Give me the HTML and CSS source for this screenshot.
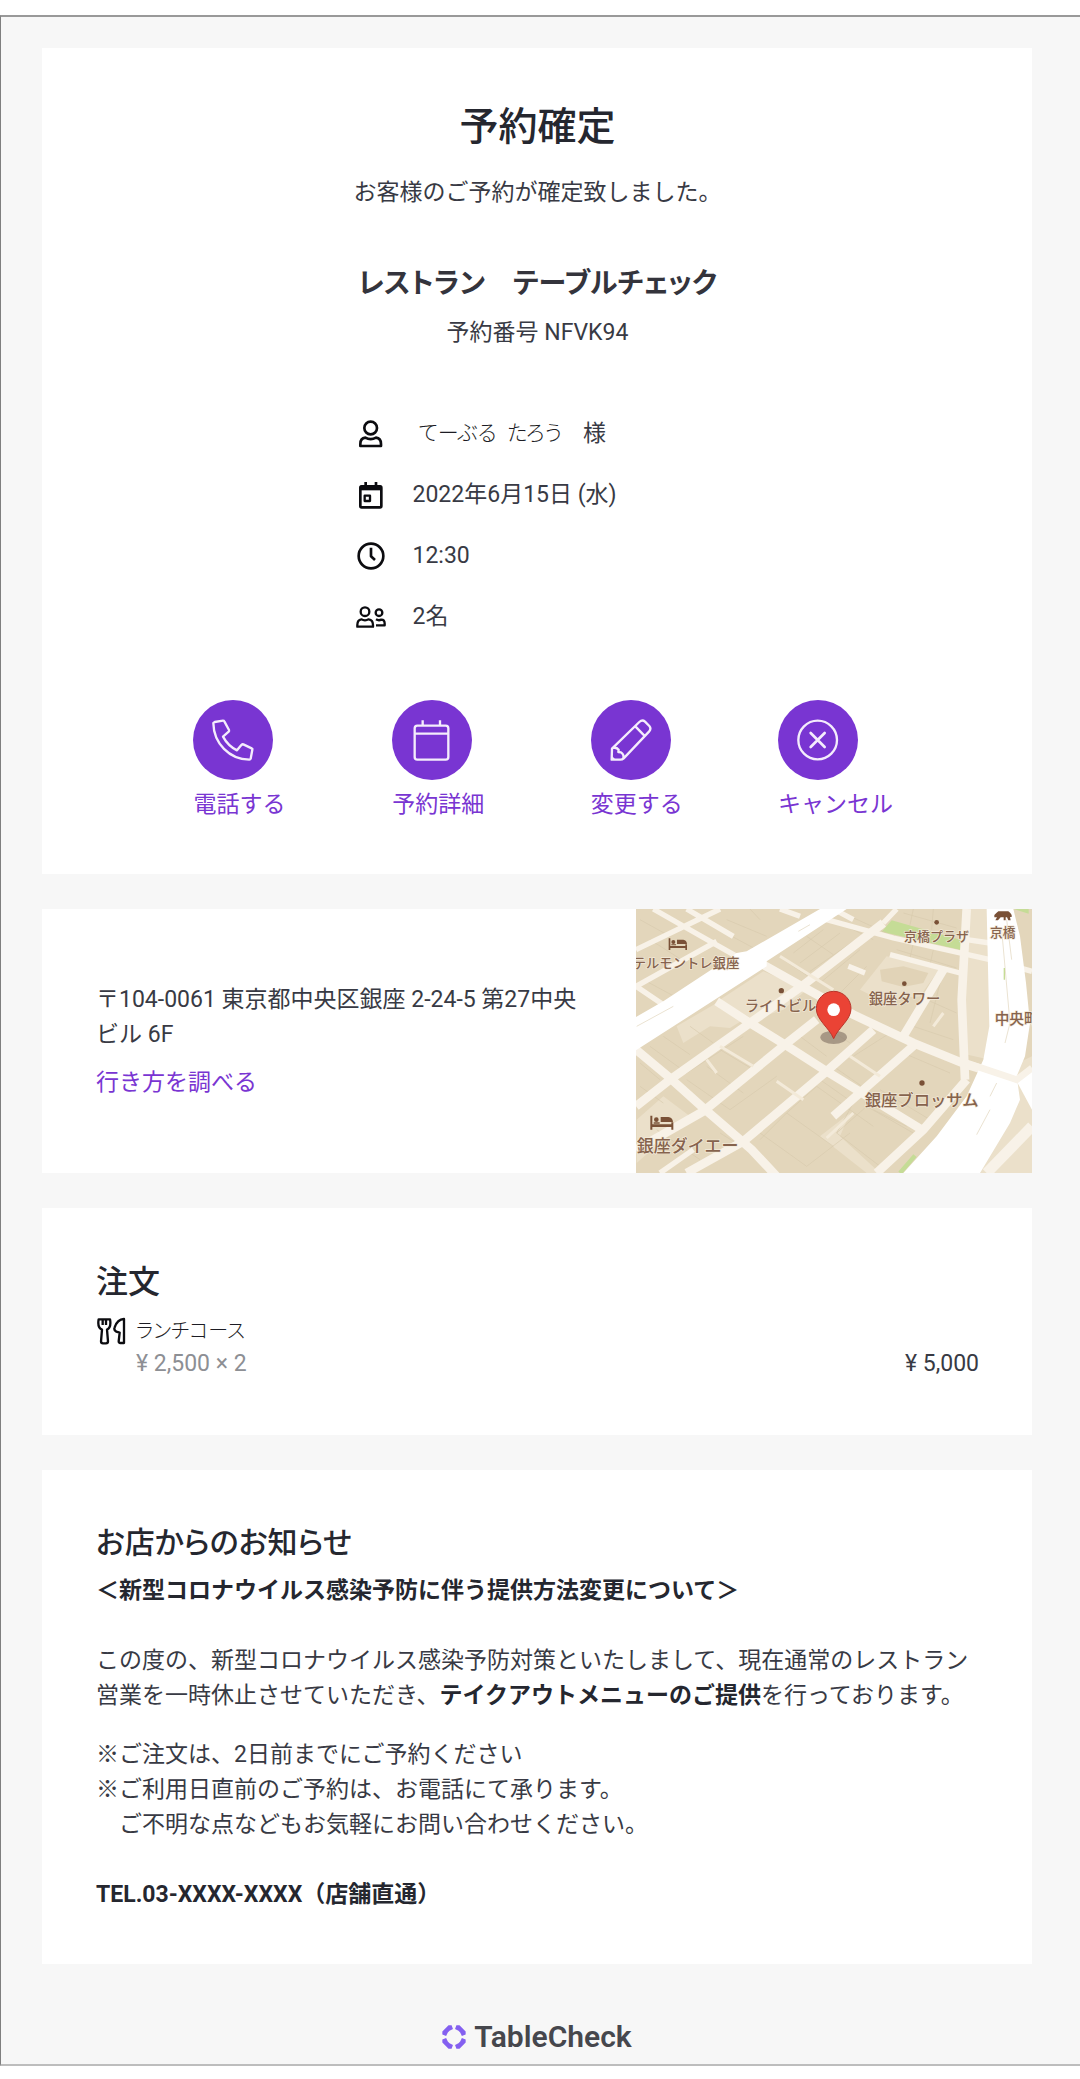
FILE: index.html
```html
<!DOCTYPE html>
<html lang="ja">
<head>
<meta charset="utf-8">
<meta name="viewport" content="width=device-width, initial-scale=1">
<title>予約確定 - TableCheck</title>
<link rel="stylesheet" href="styles.css">
</head>
<body>
<div class="frame">
  <main class="stack">
    <section class="card summary">
      <h1 class="title">予約確定</h1>
      <p class="lead">お客様のご予約が確定致しました。</p>
      <h2 class="heading shop">レストラン　テーブルチェック</h2>
      <p class="number">予約番号 NFVK94</p>

      <ul class="facts">
        <li class="fact">
          <svg class="icon" viewBox="0 0 90 90" aria-hidden="true"><circle cx="44" cy="27" r="19"/><path d="M13 81H75V75C75 65 70 57 60 56Q44 65 28 56C18 57 13 65 13 75Z"/></svg>
          <span class="guest"><span class="guest-name">てーぶる&ensp;たろう</span><span>様</span></span>
        </li>
        <li class="fact">
          <svg class="icon" viewBox="0 0 90 90" aria-hidden="true"><rect x="13" y="19" width="63" height="63" rx="4"/><path class="solid" d="M13 17H76V31H13Z"/><path d="M29 6V20M60 6V20"/><rect class="thin" x="26" y="47" width="16" height="16"/></svg>
          <span>2022年6月15日 (水)</span>
        </li>
        <li class="fact">
          <svg class="icon" viewBox="0 0 90 90" aria-hidden="true"><circle cx="45" cy="45" r="37"/><path d="M45 20V46L57 57"/></svg>
          <span>12:30</span>
        </li>
        <li class="fact">
          <svg class="icon" viewBox="0 0 90 90" aria-hidden="true"><circle class="thin" cx="27" cy="29" r="13"/><circle class="thin" cx="69" cy="32" r="10"/><path class="thin" d="M4 74H51V69C51 60 47 53 38 52Q27 58 16 52C7 53 4 60 4 69ZM60 70H86V65C86 58 82 53 76 53Q68 57 60 52"/></svg>
          <span>2名</span>
        </li>
      </ul>

      <nav class="actions" aria-label="予約の操作">
        <a class="action" href="#call">
          <svg class="disc" viewBox="0 0 240 240" aria-hidden="true"><circle class="disc-bg" cx="120" cy="120" r="120"/><path d="M61 69Q62 67 65 66L90 62Q93 62 94 64L108 90Q109 93 107 95L90 110Q105 138 132 151L145 135Q148 132 151 133L176 145Q179 146 178 149L173 176Q172 179 169 179C109 178 62 130 61 69Z"/></svg>
          <span>電話する</span>
        </a>
        <a class="action" href="#detail">
          <svg class="disc" viewBox="0 0 240 240" aria-hidden="true"><circle class="disc-bg" cx="120" cy="120" r="120"/><rect x="68" y="77" width="101" height="102" rx="8"/><path d="M68 101H169M92 61V77M144 61V77"/></svg>
          <span>予約詳細</span>
        </a>
        <a class="action" href="#change">
          <svg class="disc" viewBox="0 0 240 240" aria-hidden="true"><circle class="disc-bg" cx="120" cy="120" r="120"/><path d="M62 179L63 146L145 66Q154 58 162 65L175 78Q182 86 174 95L98 175Q94 179 88 179ZM133 79L160 107M66 144Q76 141 83 149L82 156L90 157Q100 164 97 175"/><path class="nib" d="M61 166L74 179H61Z"/></svg>
          <span>変更する</span>
        </a>
        <a class="action" href="#cancel">
          <svg class="disc" viewBox="0 0 240 240" aria-hidden="true"><circle class="disc-bg" cx="120" cy="120" r="120"/><circle cx="119" cy="120" r="58"/><path class="cross" d="M98 99L140 141M140 99L98 141"/></svg>
          <span>キャンセル</span>
        </a>
      </nav>
    </section>

    <section class="card place">
      <div class="address">
        <p>〒104-0061 東京都中央区銀座 2-24-5 第27中央ビル 6F</p>
        <a class="route" href="#route">行き方を調べる</a>
      </div>
      <svg class="map" viewBox="48 28 1188 792" preserveAspectRatio="xMidYMid slice" role="img" aria-label="地図">
        <rect x="48" y="28" width="1188" height="792" fill="#e3d6bb"/>
        <!-- open lots and parks -->
        <g fill="#ebe0ca">
          <path d="M300 300L430 215L560 270L490 330L400 360ZM170 380L290 310L370 360L330 385L270 380L190 430ZM600 710L690 640L660 710L780 820H740ZM720 270L800 170L960 205L900 290L780 300ZM1040 28H1110V480L1020 460Z"/>
          <path d="M130 590L210 650L50 790V660ZM1110 530L1236 470V820H1080Z"/>
        </g>
        <path d="M780 210L850 200L925 220L910 250L850 262L785 245Z" fill="#e1d3b7"/>
        <path d="M815 62L1026 122V152L785 96ZM1182 28H1226V42Z" fill="#c5dc96"/>
        <!-- plot outlines -->
        <g fill="none" stroke="#d8caae" stroke-width="2">
          <path d="M90 440L200 520L370 410M130 410L210 465M210 380L280 430M300 450L400 510M200 540L330 630L470 530M260 500L370 580M420 700L560 800M420 720L500 640L640 740M500 640L590 560L760 680M560 800L690 700M600 540L700 610L650 700L780 800M650 700L740 620L880 700"/>
          <path d="M490 180L580 240M520 160L610 90M540 190L660 100M570 215L700 125M560 110L640 165M640 60L760 120M690 50L800 100M600 250L720 150M650 290L740 200M850 40L1010 85M880 28L870 75M940 28L935 90M830 150L1010 205M880 130L870 175M940 150L930 195M700 470L810 400L870 430M640 500L740 570L850 480M850 460L990 520M760 630L860 680M780 570L930 660M880 380L1000 420M920 300L1010 340M960 250L930 370M540 410L620 470M600 370L690 430M60 560L130 610M60 490L120 540M300 700L380 750M110 690L240 780M320 60L440 110M280 80L410 150M90 120L200 190M60 60L150 110M70 240L200 310M390 28L420 60"/>
        </g>
        <!-- local streets -->
        <g fill="none" stroke="#f8f2e8" stroke-width="26">
          <path d="M48 450L150 535L250 625L395 750L470 830M290 305L390 370L495 435L620 515L905 690M430 195L545 260L700 345L880 430L1040 495L1190 540"/>
          <path d="M48 620L150 540L390 370L545 260L790 70M48 750L250 635L495 435L590 360M200 820L370 725L620 515L760 390M640 650L890 430M770 820L910 690L1040 540"/>
          <path d="M1040 28L1025 300L1035 540M850 410L970 210"/>
        </g>
        <g fill="none" stroke="#f8f2e8" stroke-width="16">
          <path d="M100 28L200 85L350 170M48 150L300 28M48 260L290 125M48 260L130 315M200 28L340 110M480 28L540 50M620 60L820 115L1110 180L1236 215M810 165L1020 220M790 70L830 28M685 200L735 220M120 820L220 750M1040 120L1110 130M640 28L700 60"/>
        </g>
        <g fill="none" stroke="#f3ead9" stroke-width="9">
          <path d="M260 480L290 520M470 545L550 600M300 440L400 500M690 470L780 530M620 715L700 640M940 380L970 340M480 170L640 270"/>
        </g>
        <!-- main avenues -->
        <g fill="#fff">
          <path d="M48 352L130 305L350 160L380 155L600 28H680L440 185V200L48 452Z"/>
          <path d="M1100 28H1180L1200 110L1218 250L1230 370L1215 470L1190 530L1200 600L1170 670L1080 820H850L950 710L1040 590L1090 480L1108 380Z"/>
          <path d="M1190 545L1236 510V630Z"/>
        </g>
        <path d="M1040 490L1190 540L1236 505" fill="none" stroke="#f8f2e8" stroke-width="20"/>
        <path d="M1236 680L1100 820" fill="none" stroke="#f8f2e8" stroke-width="32"/>
        <path d="M1145 90L1170 370L1155 430M1160 60L1175 180M1130 550L1110 590M1110 630L1070 705M50 380L160 320M535 95L570 75" fill="none" stroke="#ebe3d2" stroke-width="3"/>
        <path d="M1153 205V240" stroke="#c5dc96" stroke-width="4"/>
        <path d="M840 820L885 768" stroke="#c5dc96" stroke-width="13"/>
        <!-- place marks -->
        <g fill="#7a5137">
          <circle cx="950" cy="68" r="7"/><circle cx="484" cy="273" r="8"/><circle cx="853" cy="252" r="7"/><circle cx="906" cy="550" r="8"/>
          <path d="M146 116H151V139H196V134H201V151H196V145H151V151H146ZM171 120H190Q200 121 201 133H171ZM154 127a6 6 0 1 1 12 0a6 6 0 1 1 -12 0M154 134H168V137H154Z"/>
          <path d="M91 648H97V674H154V668H160V690H154V682H97V690H91ZM122 652H145Q158 654 159 667H122ZM102 660a7 7 0 1 1 14 0a7 7 0 1 1 -14 0M101 668H119V672H101Z"/>
          <path d="M1123 46L1129 40L1135 35H1165L1171 40L1175 46V52H1170L1172 62H1165L1161 53H1157V62H1151V53H1142L1134 62H1126L1131 53H1123Z"/>
        </g>
        <g class="map-text">
          <text x="852" y="123" font-size="39">京橋プラザ</text>
          <text x="1110" y="112" font-size="38">京橋</text>
          <text x="38" y="204" font-size="40">テルモントレ銀座</text>
          <text x="374" y="333" font-size="43">ライトビル</text>
          <text x="746" y="313" font-size="43">銀座タワー</text>
          <text x="1124" y="372" font-size="44">中央町</text>
          <text x="734" y="618" font-size="49">銀座ブロッサム</text>
          <text x="50" y="756" font-size="51">銀座ダイエー</text>
        </g>
        <ellipse cx="641" cy="413" rx="40" ry="20" fill="#6b5a50" opacity=".5"/>
        <path d="M641 417C627 383 589 361 589 327A52 52 0 0 1 693 327C693 361 655 383 641 417Z" fill="#ea4335" stroke="#b9362b" stroke-width="3"/>
        <circle cx="641" cy="330" r="19" fill="#fff"/>
      </svg>
    </section>

    <section class="card order">
      <h2 class="heading">注文</h2>
      <div class="item">
        <svg class="icon" viewBox="0 0 90 90" aria-hidden="true"><path class="thin" d="M8 10H42C45 26 43 36 33 41L36 76Q36 82 30 82H21Q15 82 15 76L18 41C7 36 5 26 8 10ZM20 12V27M30 12V27M84 9V81H73Q68 81 68 76L71 50L61 47C55 44 54 39 56 34C60 22 67 10 84 9Z"/></svg>
        <div class="item-text">
          <p class="item-name">ランチコース</p>
          <p class="item-line"><span class="unit">¥ 2,500 × 2</span><span>¥ 5,000</span></p>
        </div>
      </div>
    </section>

    <section class="card notice">
      <h2 class="heading">お店からのお知らせ</h2>
      <p class="strong">＜新型コロナウイルス感染予防に伴う提供方法変更について＞</p>
      <p class="spaced">この度の、新型コロナウイルス感染予防対策といたしまして、現在通常のレストラン営業を一時休止させていただき、<strong>テイクアウトメニューのご提供</strong>を行っております。</p>
      <p class="notes">※ご注文は、2日前までにご予約ください<br>※ご利用日直前のご予約は、お電話にて承ります。<br>　ご不明な点などもお気軽にお問い合わせください。</p>
      <p class="strong spaced">TEL.03-XXXX-XXXX（店舗直通）</p>
    </section>
  </main>

  <footer class="brand">
    <svg class="mark" viewBox="0 0 70 70" aria-hidden="true">
      <path d="M1 19L19 1H28L32 12L22 17L17 22L12 32L1 28Z"/>
      <path d="M1 19L19 1H28L32 12L22 17L17 22L12 32L1 28Z" transform="rotate(90 35 35)"/>
      <path d="M1 19L19 1H28L32 12L22 17L17 22L12 32L1 28Z" transform="rotate(180 35 35)"/>
      <path d="M1 19L19 1H28L32 12L22 17L17 22L12 32L1 28Z" transform="rotate(270 35 35)"/>
    </svg>
    <span>TableCheck</span>
  </footer>
</div>
</body>
</html>
```
FILE: styles.css
```css
* { box-sizing: border-box; }

body {
  margin: 0;
  padding: 15px 0 13px;
  background: #fff;
  color: #383a44;
  font: 23px/35px Roboto, "Noto Sans CJK JP", sans-serif;
}

h1, h2, p, ul { margin: 0; padding: 0; }

.frame {
  padding: 31px 48px 7px 41px;
  border-top: 2px solid #999;
  border-bottom: 2px solid #bdbdbd;
  border-left: 1px solid #7f7f7f;
  background: #f7f7f7;
}

.stack {
  display: flex;
  flex-direction: column;
  gap: 35px;
}

.card {
  padding: 52px 53px 52px 54px;
  background: #fff;
}

.heading {
  color: #25272f;
  font-size: 32px;
  font-weight: 500;
  line-height: 42px;
  font-feature-settings: "palt";
}

/* Reservation summary */
.summary {
  display: flex;
  flex-direction: column;
  align-items: center;
  text-align: center;
}

.title {
  color: #25272f;
  font-size: 39px;
  font-weight: 500;
  line-height: 54px;
}

.lead { margin-top: 21px; }
.shop { margin-top: 53px; color: #34343c; font-size: 28px; font-weight: 700; }
.number { margin-top: 10px; }

.facts {
  display: flex;
  flex-direction: column;
  gap: 26px;
  width: 364px;
  max-width: 100%;
  margin-top: 66px;
  list-style: none;
  text-align: left;
}

.fact {
  display: flex;
  align-items: center;
  gap: 27px;
}

.icon {
  flex: none;
  width: 30px;
  height: 30px;
  fill: none;
  stroke: #0c0c10;
  stroke-width: 8;
  stroke-linejoin: round;
}

.icon .thin { stroke-width: 7; }
.icon .solid { fill: #0c0c10; stroke: none; }

.guest { display: flex; gap: 21px; padding-left: 6px; }
.guest-name, .item-name { color: #1c1c24; font-weight: 300; font-feature-settings: "palt"; }
.guest-name { font-size: 21px; }

.actions {
  display: grid;
  grid-template-columns: repeat(4, 1fr);
  justify-items: center;
  width: 90%;
  margin-top: 66px;
}

a { color: #7935d2; text-decoration: none; }

.action {
  display: flex;
  flex-direction: column;
  gap: 7px;
  text-align: left;
}

.disc {
  width: 80px;
  height: 80px;
  fill: none;
  stroke: #f4ecfc;
  stroke-width: 7;
  stroke-linejoin: round;
}

.disc-bg { fill: #7935d2; stroke: none; }
.disc .nib { fill: #f4ecfc; stroke: none; }
.disc .cross { stroke-width: 8; stroke-linecap: round; }

/* Address and map */
.place {
  display: grid;
  grid-template-columns: 3fr 2fr;
  align-items: center;
  padding: 0;
}

.address { padding: 0 53px 0 54px; }
.route { display: block; margin-top: 13px; }
.map { display: block; width: 100%; aspect-ratio: 3 / 2; }

.map-text {
  fill: #86634d;
  stroke: #f3ead9;
  stroke-width: 4;
  paint-order: stroke;
  font-family: "Noto Sans CJK JP", sans-serif;
  font-weight: 500;
}

/* Order */
.order { padding-top: 53px; padding-bottom: 54px; }

.item {
  display: flex;
  gap: 10px;
  margin-top: 13px;
}

.item-text { flex: 1; }
.item-name { font-size: 20px; line-height: 30px; }
.item-line { display: flex; justify-content: space-between; }
.unit { color: #8d8f94; }

/* Notice */
.notice .heading { font-size: 30px; }
.notice .strong, .notice strong { color: #25272f; font-weight: 700; }
.notice .heading + p { margin-top: 9px; }
.spaced { margin-top: 35px; }
.notes { margin-top: 24px; }

/* Footer */
.brand {
  display: flex;
  align-items: center;
  justify-content: center;
  gap: 8px;
  padding-top: 53px;
  color: #46474d;
  font-size: 30px;
  font-weight: 600;
  line-height: 40px;
}

.mark { width: 24px; height: 24px; fill: #8460f0; }
```
